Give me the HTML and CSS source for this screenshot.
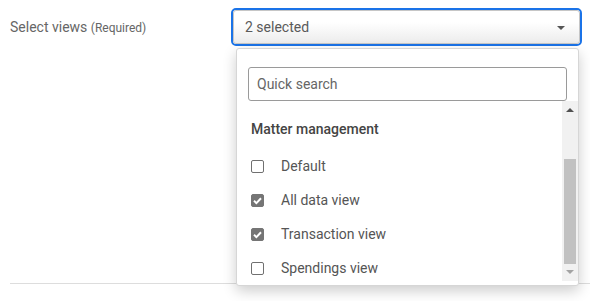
FILE: index.html
```html
<!DOCTYPE html>
<html>
<head>
<meta charset="utf-8">
<link rel="stylesheet" href="styles.css">
</head>
<body>
<div class="section">
  <div class="field">
    <label class="label">Select views <span class="req">(Required)</span></label>
    <div class="select-wrap">
      <div class="select">
        <div class="select-inner">
          <span class="value">2 selected</span>
          <span class="caret"></span>
        </div>
      </div>
      <div class="dropdown">
        <div class="search">Quick search</div>
        <div class="list-wrap">
          <div class="list">
            <div class="group">Matter management</div>
            <div class="item"><span class="cb"></span><span class="txt">Default</span></div>
            <div class="item"><span class="cb checked"><svg width="13" height="13" viewBox="0 0 13 13"><path d="M3 6.8 L5.4 9.1 L10 4.3" fill="none" stroke="#fff" stroke-width="2"/></svg></span><span class="txt">All data view</span></div>
            <div class="item"><span class="cb checked"><svg width="13" height="13" viewBox="0 0 13 13"><path d="M3 6.8 L5.4 9.1 L10 4.3" fill="none" stroke="#fff" stroke-width="2"/></svg></span><span class="txt">Transaction view</span></div>
            <div class="item"><span class="cb"></span><span class="txt">Spendings view</span></div>
          </div>
          <div class="scrollbar">
            <span class="arrow up"></span>
            <div class="thumb"></div>
            <span class="arrow down"></span>
          </div>
        </div>
      </div>
    </div>
  </div>
</div>
<div class="divider"></div>
</body>
</html>
```

FILE: styles.css
```css
html, body {
  margin: 0;
  padding: 0;
  background: #fff;
  font-family: Roboto, "Liberation Sans", sans-serif;
}
body {
  min-height: 301px;
}
.section {
  height: 283px;
  box-sizing: border-box;
  padding: 8px 0 0 10px;
}
.field {
  display: flex;
  align-items: center;
}
.label {
  width: 221px;
  font-size: 14px;
  color: #666;
}
.req {
  font-size: 12px;
}
.select-wrap {
  position: relative;
  width: 351px;
}
.select {
  height: 38px;
  box-sizing: border-box;
  border: 2px solid #1a73e8;
  border-radius: 5px;
}
.select-inner {
  height: 100%;
  box-sizing: border-box;
  border: 1px solid #c6c6c6;
  border-radius: 3px;
  background: linear-gradient(to bottom, #ffffff 35%, #ececec 100%);
  display: flex;
  align-items: center;
  justify-content: space-between;
  padding: 0 14px 0 11px;
}
.value {
  font-size: 14px;
  color: #5a5a5a;
}
.caret {
  width: 0;
  height: 0;
  border-left: 4px solid transparent;
  border-right: 4px solid transparent;
  border-top: 4px solid #555;
  margin-top: 1px;
}
.dropdown {
  position: absolute;
  left: 5px;
  top: 40px;
  width: 343px;
  box-sizing: border-box;
  background: #fff;
  border: 1px solid #d6d6d6;
  border-radius: 3px;
  box-shadow: 0 5px 14px rgba(0, 0, 0, 0.2);
  padding: 18px 0 4px 0;
  z-index: 2;
}
.search {
  margin: 0 11px;
  height: 34px;
  box-sizing: border-box;
  border: 1px solid #9a9a9a;
  border-radius: 3px;
  padding: 0 8px;
  display: flex;
  align-items: center;
  font-size: 14px;
  color: #666;
}
.list-wrap {
  display: flex;
  height: 180px;
  overflow: hidden;
}
.list {
  flex: 1;
  padding: 11px 0 0 14px;
}
.group {
  height: 34px;
  display: flex;
  align-items: center;
  font-size: 14px;
  font-weight: 500;
  color: #444;
  margin-bottom: 3px;
}
.item {
  height: 34px;
  display: flex;
  align-items: center;
  font-size: 14px;
  color: #555;
}
.cb {
  width: 13px;
  height: 13px;
  box-sizing: border-box;
  border: 1px solid #707070;
  border-radius: 2px;
  margin-right: 17px;
  display: flex;
}
.cb.checked {
  background: #757575;
  border-color: #757575;
}
.cb svg {
  margin: -1px;
}
.scrollbar {
  width: 16px;
  background: #f1f1f1;
  display: flex;
  flex-direction: column;
  align-items: center;
}
.arrow {
  width: 0;
  height: 0;
  border-left: 4px solid transparent;
  border-right: 4px solid transparent;
}
.arrow.up {
  border-bottom: 4px solid #505050;
  margin-top: 7px;
}
.arrow.down {
  border-top: 4px solid #a3a3a3;
  margin-top: 6px;
}
.thumb {
  width: 12px;
  height: 105px;
  background: #c1c1c1;
  margin-top: 47px;
}
.divider {
  height: 1px;
  background: #ddd;
  margin-left: 10px;
}
```
